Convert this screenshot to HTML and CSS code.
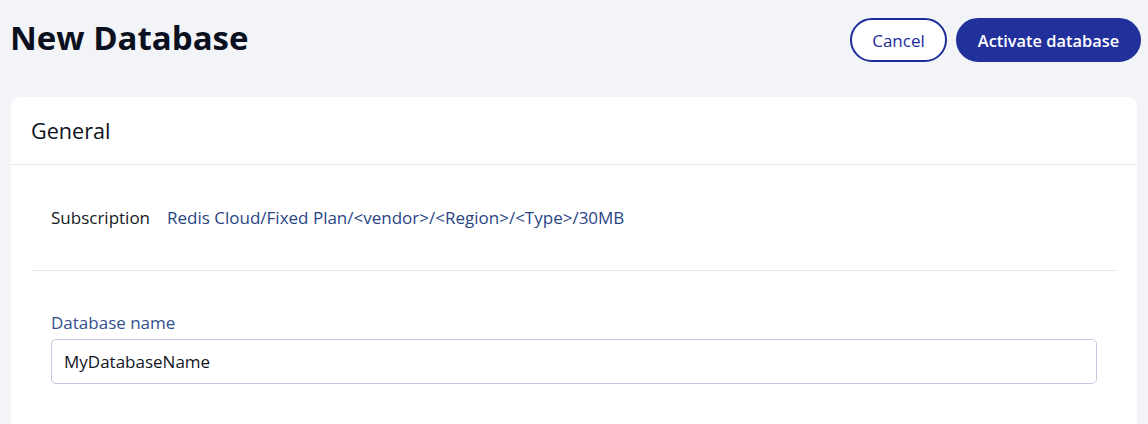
FILE: index.html
```html
<!DOCTYPE html>
<html>
<head>
<meta charset="utf-8">
<link rel="stylesheet" href="styles.css">
</head>
<body>
<div class="page">
  <header class="topbar">
    <h1 class="title">New Database</h1>
    <div class="actions">
      <button class="btn btn-outline">Cancel</button>
      <button class="btn btn-primary">Activate database</button>
    </div>
  </header>
  <section class="card">
    <div class="card-head">General</div>
    <div class="card-body">
      <div class="sub-row">
        <span class="sub-label">Subscription</span>
        <span class="sub-value">Redis Cloud/Fixed Plan/&lt;vendor&gt;/&lt;Region&gt;/&lt;Type&gt;/30MB</span>
      </div>
      <div class="field">
        <label class="field-label">Database name</label>
        <div class="input">MyDatabaseName</div>
      </div>
    </div>
  </section>
</div>
</body>
</html>
```
FILE: styles.css
```css
html, body {
  margin: 0;
  padding: 0;
  background: #f3f4f7;
  font-family: "Open Sans", "Noto Sans", sans-serif;
  color: #0f1422;
}
.page {
  padding: 0 7px 0 11px;
}
.topbar {
  display: flex;
  align-items: center;
  justify-content: space-between;
  height: 80px;
}
.title {
  margin: 0 0 6px -1px;
  font-size: 33px;
  font-weight: 700;
  color: #0b1020;
}
.actions {
  display: flex;
  gap: 9px;
}
.btn {
  height: 44px;
  border-radius: 22px;
  font-family: inherit;
  padding: 0;
  cursor: pointer;
}
.btn-outline {
  background: #fff;
  border: 2px solid #1e2b9b;
  color: #1e2b9b;
  width: 97px;
  font-size: 17px;
}
.btn-primary {
  background: #22309c;
  border: 2px solid #22309c;
  color: #fff;
  font-weight: 600;
  width: 185px;
  font-size: 16.4px;
}
.card {
  margin-top: 17px;
  margin-right: 4px;
  background: #fff;
  border-radius: 9px 9px 0 0;
  min-height: 330px;
}
.card-head {
  height: 67px;
  display: flex;
  align-items: center;
  padding-left: 20px;
  font-size: 21.6px;
  font-weight: 500;
  color: #10131c;
  border-bottom: 1px solid #e5e8ee;
}
.card-body {
  padding: 0 20px;
}
.sub-row {
  display: flex;
  align-items: center;
  gap: 17px;
  height: 105px;
  padding-left: 20px;
  border-bottom: 1px solid #e5e8ee;
  font-size: 17px;
}
.sub-label {
  color: #141824;
}
.sub-value {
  color: #2a4585;
}
.field {
  padding: 41px 20px 0;
}
.field-label {
  display: block;
  font-size: 17px;
  line-height: 22px;
  color: #34508e;
  margin-bottom: 5px;
}
.input {
  box-sizing: border-box;
  height: 45px;
  border: 1px solid #c4cadb;
  border-radius: 5px;
  display: flex;
  align-items: center;
  padding-left: 12px;
  font-size: 17px;
  color: #0f1422;
}
```
